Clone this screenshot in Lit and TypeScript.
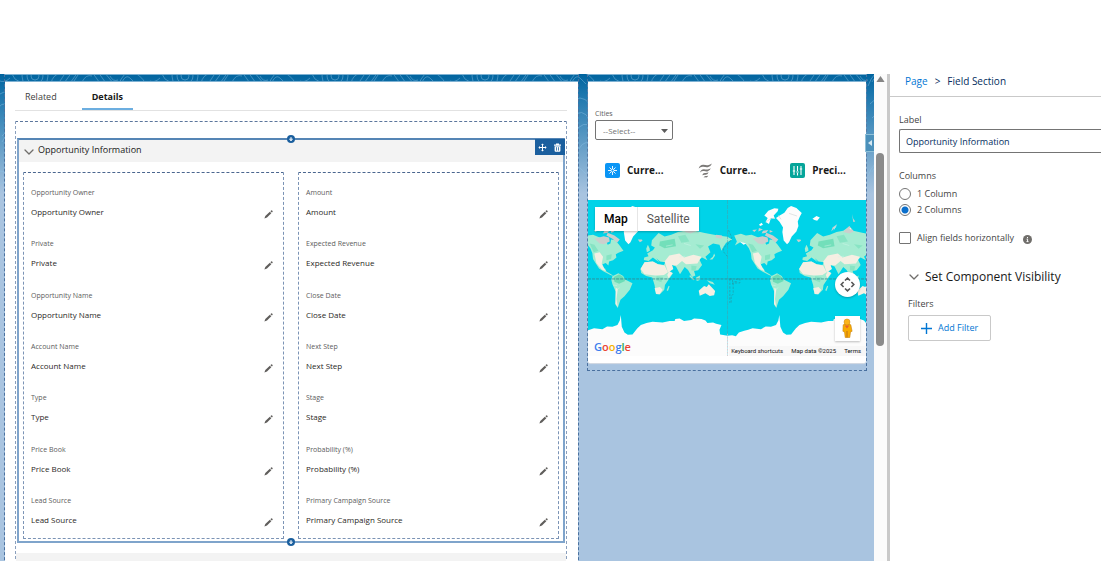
import { LitElement, html, css, svg } from "lit";
import { customElement, property, state } from "lit/decorators.js";

const FIELDS: string[][] = [
  ["Opportunity Owner", "Private", "Opportunity Name", "Account Name", "Type", "Price Book", "Lead Source"],
  ["Amount", "Expected Revenue", "Close Date", "Next Step", "Stage", "Probability (%)", "Primary Campaign Source"],
];

const chevron = html`<svg class="chevron" viewBox="0 0 10 6" aria-hidden="true">
  <path d="M1 1l4 4 4-4" fill="none" stroke="#706e6b" stroke-width="1.3" stroke-linecap="round" stroke-linejoin="round" />
</svg>`;

const base = css`
  * {
    box-sizing: border-box;
  }
  button,
  input,
  select {
    font: inherit;
    color: inherit;
    margin: 0;
    padding: 0;
  }
  button {
    border: 0;
    background: none;
    cursor: pointer;
  }
  svg {
    display: block;
  }
  .chevron {
    width: 10px;
    height: 6px;
    flex: none;
  }
`;

@customElement("field-section")
export class FieldSection extends LitElement {
  @property() heading = "";

  static styles = [
    base,
    css`
      :host {
        display: block;
        position: relative;
        border: 2px solid #7fa4cb;
        border-top-color: #5585b5;
      }
      .header {
        display: flex;
        align-items: center;
        height: 22px;
        padding: 0 0 2px 5px;
        gap: 4px;
        background: #f3f3f3;
        color: #181818;
      }
      .header h2 {
        margin: 0;
        font-size: 9px;
        line-height: 14px;
        font-weight: 400;
      }
      .toggle {
        display: flex;
        align-items: center;
        height: 20px;
        padding-top: 4px;
      }
      .tools {
        position: absolute;
        top: -1px;
        right: -2px;
        display: flex;
        gap: 4px;
        padding: 4px 2px 3px;
        background: #1b5f9e;
      }
      .tools svg {
        width: 11px;
        height: 9px;
      }
      .dot {
        position: absolute;
        left: 50%;
        width: 8px;
        height: 8px;
        margin-left: -4px;
        border-radius: 50%;
        background: #1b5f9e;
      }
      .dot svg {
        width: 8px;
        height: 8px;
      }
      .dot.top {
        top: -5px;
      }
      .dot.bottom {
        bottom: -5px;
      }
      .columns {
        display: grid;
        grid-template-columns: 1fr 1fr;
        gap: 14px;
        padding: 10px 4px 2px;
      }
      .column {
        display: grid;
        align-content: space-between;
        min-height: 367px;
        margin: 0;
        padding: 14px 10px 11px 7px;
        border: 1px dashed #7b93b5;
        border-top-color: #4a668f;
      }
      .field {
        display: grid;
        grid-template-columns: 1fr 9px;
        row-gap: 6px;
      }
      dt {
        grid-column: 1 / 3;
        font-size: 7px;
        line-height: 12px;
        color: #5c5c5c;
      }
      dd {
        margin: 0;
        font-size: 8px;
        line-height: 14px;
        color: #2b2826;
      }
      .edit {
        align-self: end;
      }
      .edit svg {
        width: 9px;
        height: 9px;
      }
    `,
  ];

  private dot(place: string) {
    return html`<button class="dot ${place}" aria-label="Add component">
      <svg viewBox="0 0 8 8">
        <path d="M4 2v3.6M2.4 4.1h3.2M2.8 4.4L4 5.9l1.2-1.5" fill="none" stroke="#fff" stroke-width="0.9" />
      </svg>
    </button>`;
  }

  render() {
    return html`
      <div class="header">
        <button class="toggle" aria-label="Collapse section">${chevron}</button>
        <h2>${this.heading}</h2>
      </div>
      <div class="tools">
        <button aria-label="Move">
          <svg viewBox="0 0 11 9" fill="none" stroke="#fff">
            <path d="M5.5 1v7M2 4.5h7" />
            <path d="M4.1 2l1.4-1.6L6.9 2zM4.1 7l1.4 1.6L6.9 7zM3 3.1L1.4 4.5 3 5.9zM8 3.1l1.6 1.4L8 5.9z" fill="#fff" stroke="none" />
          </svg>
        </button>
        <button aria-label="Delete">
          <svg viewBox="0 0 11 9">
            <path d="M2 1.6h2V.5h3v1.1h2v1.1H2z" fill="#fff" />
            <path d="M2.6 3.3h5.8v4.4q0 1-1 1H3.6q-1 0-1-1z" fill="#fff" />
            <path d="M4.5 4.2v3.4M6.5 4.2v3.4" stroke="#1b5f9e" stroke-width="0.8" />
          </svg>
        </button>
      </div>
      <div class="columns">
        ${FIELDS.map(
          (column) => html`<dl class="column">
            ${column.map(
              (name) => html`<div class="field">
                <dt>${name}</dt>
                <dd>${name}</dd>
                <button class="edit" aria-label="Edit ${name}">
                  <svg viewBox="0 0 9 9" fill="#5f5d5b">
                    <path d="M1.3 5.9L5.8 1.8l1.5 1.5L3 7.6.4 8.6z" />
                    <path d="M6.4 1.2L7.1.5q.5-.4 1 0l.4.4q.4.5 0 1l-.7.7z" />
                  </svg>
                </button>
              </div>`
            )}
          </dl>`
        )}
      </div>
      ${this.dot("top")}${this.dot("bottom")}
    `;
  }
}

const world = svg`
  <g id="world">
    <g fill="#a5ecd2">
      <path d="M20 106L40 101 55 106 72 104 92 112 110 122 116 134 124 130 126 118 138 120 150 134 163 152 148 158 140 162 142 172 132 180 120 184 118 196 110 188 100 192 98 206 108 205 112 214 126 222 134 228 124 224 104 214 90 205 80 189 72 176 70 159 64 144 54 131 38 126 22 136 28 124z" />
      <path d="M130 228L148 219 162 227 168 238 190 249 182 268 166 288 154 298 150 310 146 323 139 312 140 274 130 252 127 240z" />
      <path d="M214 206L226 186 251 184 266 192 286 194 296 214 311 219 298 238 287 254 285 268 272 282 260 281 256 254 249 232 231 227 216 218z" />
      <path d="M298 256l3 2-5 14-4-2z" />
      <path d="M224 179L225 172 238 168 234 160 251 150 257 142 246 136 248 120 268 99 286 109 306 104 326 96 346 92 364 79 376 92 406 99 446 106 474 110 488 118 470 128 462 140 456 152 450 134 431 130 416 139 423 156 408 170 414 180 398 172 390 178 398 194 386 210 374 212 378 226 368 230 356 209 346 200 332 222 320 199 308 194 311 206 296 217 284 194 288 186 272 184 261 174 270 186 251 172 238 182z" />
      <path d="M231 146l5-12 5 10 1 8-9 4zM420 178l10-8 4-10 3 6-8 12z" />
      <path d="M362 224l14 14-4 2-12-12zM380 232l12-6-2 14-8 2zM412 240l18 5 6 8-14-4z" />
    </g>
    <g fill="#66dcb4">
      <path d="M134 230l16-8 12 8 6 12-18 8-14-6z" opacity=".9" />
      <path d="M62 130l14 4 12 18-14 4z" opacity=".5" />
      <path d="M272 124l44-8 4 22-34 6-16-8z" opacity=".8" />
      <path d="M326 108l22-4 12 20-24 4zM378 132l26 4-12 10zM366 196l16 2-4 14-12-2zM262 228l20 2-6 16-16-6z" opacity=".45" />
      <path d="M112 166l16-4-2 14-14 4z" opacity=".5" />
    </g>
    <g fill="#f5efe3">
      <path d="M76 160L92 156 102 170 98 190 110 212 98 208 82 188z" />
      <path d="M214 206L226 186 251 184 266 192 286 196 296 216 284 224 258 226 226 222z" />
      <path d="M286 184L300 166 330 160 344 172 372 164 396 170 384 190 350 192 338 182 322 196 308 194 312 206 296 217z" />
      <path d="M388 271L404 257 412 260 418 252 428 262 437 272 434 285 421 287 408 279 391 286z" />
      <path d="M256 264l16-4 8 8-9 14-10-1zM140 262l6 4-4 30 4 24-7-10z" />
      <path d="M300 212l10 6-12 16-4-10z" />
    </g>
    <g fill="#cbcfcd">
      <path d="M76 116L104 108 120 112 122 124 104 132 92 130zM116 98L136 106 152 118 144 128 130 116 112 106z" />
      <path d="M94 84l12 4-14 6zM106 92l16-2-6 8-14 2zM74 90l14-2-8 8zM126 90l10 4-10 4z" />
      <path d="M346 96l18-18 14 16-14 6zM310 94l4-12 14-10-10 14zM372 42l4 14 6 8-6 2zM440 104l18 2-2 10-18-4z" />
      <path d="M206 118l12 0 2 4-8 4z" />
    </g>
    <g fill="#fcfcfc">
      <path d="M145 54L156 46 170 38 180 24 190 18 206 24 222 39 216 50 210 64 212 78 206 94 192 109 184 126 178 132 168 121 164 96 166 82 156 66z" />
      <path d="M110 46L122 32 140 25 152 26 150 34 138 46 142 56 130 54 124 72 114 66 120 54zM254 56l12-8 10 4-8 10-8-2zM318 90l-2 6 4-14 8-8zM364 86l4-2 2 4zM36 124l20 6-8 4zM94 74l8-6 4 6-8 4z" />
      <path d="M0 406L14 404 25 407 34 396 50 391 62 388 75 383 100 386 114 378 130 379 145 374 152 360 155 344 158 379 166 396 176 403 190 402 204 384 215 374 232 368 250 364 280 366 301 362 316 362 318 356 331 354 344 362 366 359 374 354 396 356 408 360 414 368 431 366 440 370 456 374 450 388 452 402 474 406V468H0z" />
    </g>
    <path d="M114 66l16-10 12-2M152 46l8 12M184 40l24 8" stroke="#d3d8d8" stroke-width="2" fill="none" />
    <path d="M142 268l10-6M330 170l18-2M344 130l20 6M290 138l20-4M132 254l12 2" stroke="#d5f8ec" stroke-width="2" opacity=".7" />
  </g>`;

@customElement("world-map")
export class WorldMap extends LitElement {
  static styles = [
    base,
    css`
      :host {
        display: block;
        position: relative;
        height: 156px;
        overflow: hidden;
        background: #00d3e8;
        font-family: Roboto, sans-serif;
      }
      .canvas {
        width: 100%;
        height: 100%;
      }
      .types {
        position: absolute;
        top: 7px;
        left: 7px;
        display: flex;
        background: #fff;
        box-shadow: 0 1px 2px rgba(0, 0, 0, 0.25);
      }
      .types button {
        height: 24px;
        padding: 0 9px;
        font-size: 12px;
        color: #565656;
      }
      .types .on {
        font-weight: 500;
        color: #000;
        border-right: 1px solid #e6e6e6;
      }
      .pan {
        position: absolute;
        right: 6px;
        top: 72px;
        width: 25px;
        height: 25px;
        border-radius: 50%;
        background: #fff;
        box-shadow: 0 1px 2px rgba(0, 0, 0, 0.25);
      }
      .pegman {
        position: absolute;
        right: 6px;
        bottom: 15px;
        width: 25px;
        height: 25px;
        background: #fff;
        box-shadow: 0 1px 2px rgba(0, 0, 0, 0.25);
      }
      .pan svg,
      .pegman svg {
        width: 25px;
        height: 25px;
      }
      .logo {
        position: absolute;
        left: 6px;
        bottom: 2px;
        font: 600 11px/14px "Open Sans", sans-serif;
      }
      .b {
        color: #3b7ded;
      }
      .r {
        color: #ea4335;
      }
      .y {
        color: #f5b400;
      }
      .g {
        color: #34a853;
      }
      .legal {
        position: absolute;
        right: 0;
        bottom: 0;
        display: flex;
        gap: 8px;
        padding: 0 5px 1px 2px;
        font-size: 6px;
        line-height: 9px;
        color: #111;
        background: rgba(245, 245, 245, 0.8);
      }
      .legal button,
      .legal a {
        font-size: 6px;
        color: inherit;
        text-decoration: none;
      }
    `,
  ];

  render() {
    return html`
      <svg class="canvas" viewBox="0 0 831 468" preserveAspectRatio="xMinYMin slice" role="img" aria-label="World map">
        <defs>${world}</defs>
        <use href="#world" x="-57" />
        <use href="#world" x="417" />
        <path d="M417 0V400" stroke="#4d9aa6" stroke-width="1.5" stroke-dasharray="12 3" />
        <path d="M417 400V468" stroke="#e6bcc0" stroke-width="2" stroke-dasharray="5 4" />
        <path d="M0 236H831" stroke="#35838c" stroke-width="2.4" stroke-dasharray="9 3" />
        <path
          d="M420 90l10 22-8 16-18 16 2 12 10 12M424 236v70l-6 6M424 236h8l0 8h12v-8h10v12h-22v8M434 248v34l-6 4v22"
          fill="none" stroke="#2f8b95" stroke-width="2" stroke-dasharray="7 4" opacity=".8"
        />
      </svg>
      <div class="types">
        <button class="on">Map</button>
        <button>Satellite</button>
      </div>
      <button class="pan" aria-label="Map camera controls">
        <svg viewBox="0 0 25 25" fill="none" stroke="#555" stroke-width="1.6">
          <path d="M10 8.5l2.5-2.4L15 8.5M10 16.5l2.5 2.4 2.5-2.4M8.6 10l-2.4 2.5L8.6 15M16.4 10l2.4 2.5-2.4 2.5" />
        </svg>
      </button>
      <button class="pegman" aria-label="Street View">
        <svg viewBox="0 0 25 25">
          <path d="M8.2 8.8q4-2.6 7.6 0l1.3 6.5-1.6.6-.7 5.6h-4.6l-.7-5.6-1.6-.6z" fill="#f9ab00" stroke="#c88516" stroke-width=".6" />
          <circle cx="12" cy="6" r="3" fill="#fbb41a" stroke="#c88516" stroke-width=".5" />
          <path d="M9.6 9.4L12 12.4l2.4-3z" fill="#e9622b" />
          <path d="M12 15v6.4" stroke="#b3651a" stroke-width=".8" />
        </svg>
      </button>
      <div class="logo" aria-label="Google"><span class="b">G</span><span class="r">o</span><span class="y">o</span><span class="b">g</span><span class="g">l</span><span class="r">e</span></div>
      <div class="legal">
        <button>Keyboard shortcuts</button>
        <span>Map data ©2025</span>
        <a href="#terms">Terms</a>
      </div>
    `;
  }
}

const sunIcon = html`<svg viewBox="0 0 15 15">
  <rect width="15" height="15" rx="2" fill="#0a95f5" />
  <path d="M7.5 3v9M3 7.5h9M4.5 4.5l6 6M10.5 4.5l-6 6" stroke="#fff" stroke-width=".9" />
  <circle cx="7.5" cy="7.5" r="1.5" fill="#0a95f5" stroke="#fff" stroke-width=".8" />
</svg>`;

const windIcon = html`<svg viewBox="0 0 15 15" fill="#7b7977">
  <path d="M.6 5.4Q2 1.6 5.4 1.8q2.6.6 4.6.4Q12.200 1.800 14 .6 12.800 3.800 9.800 4.200 7.600 4.400 5.400 3.800 2.800 3.400.600 5.400z" />
  <path d="M2 9.400Q3.200 6 6 6.200q2 .4 3.600.2Q11.400 6.200 12.800 5.200 11.800 8 9.400 8.400 7.600 8.600 6 8 4 7.600 2 9.400z" />
  <path d="M4.200 12.200Q5 9.800 7 9.900q1.800.3 3.600-.7-.7 2.400-2.700 2.600-1.900-.3-3.700.4z" />
  <path d="M5.600 14.600Q6.200 13 7.600 13q1.400.1 2.600-.5-.6 1.900-2 2-1.400-.3-2.600.1z" />
</svg>`;

const rainIcon = html`<svg viewBox="0 0 15 15">
  <rect width="15" height="15" rx="2" fill="#06a59a" />
  <path d="M4 3v9M7.500 3v5M7.500 10v2.400M11 3v9" stroke="#fff" stroke-width="1.100" />
  <path d="M2.800 8h2.400M6.300 9h2.400M9.800 6h2.400" stroke="#fff" stroke-width="1.100" />
</svg>`;

@customElement("weather-card")
export class WeatherCard extends LitElement {
  static styles = [
    base,
    css`
      :host {
        display: block;
        padding: 26px 0 7px;
        background: #fff;
        border-radius: 0 0 2px 2px;
        box-shadow: 0 1px 1px #d5dbe3;
      }
      .city {
        width: 78px;
        margin-left: 7px;
      }
      label {
        display: block;
        font-size: 7px;
        line-height: 12px;
        color: #5c5c5c;
      }
      .picker {
        display: grid;
        align-items: center;
      }
      .picker > * {
        grid-area: 1 / 1;
      }
      select {
        appearance: none;
        width: 100%;
        height: 20px;
        padding-left: 7px;
        border: 1px solid #747474;
        border-radius: 2px;
        background: #fff;
        font-size: 8px;
        color: #747474;
      }
      .arrow {
        width: 7px;
        height: 4px;
        justify-self: end;
        margin: 2px 5px 0 0;
        pointer-events: none;
      }
      .tabs {
        display: grid;
        grid-template-columns: repeat(3, 1fr);
        padding: 22px 0;
      }
      .tabs button {
        display: flex;
        align-items: center;
        gap: 7px;
        height: 16px;
        padding-left: 17px;
        font-size: 10px;
        line-height: 14px;
        font-weight: 700;
        color: #181818;
      }
      .tabs svg {
        width: 15px;
        height: 15px;
        flex: none;
      }
    `,
  ];

  render() {
    return html`
      <div class="city">
        <label for="city">Cities</label>
        <div class="picker">
          <select id="city"><option>--Select--</option></select>
          <svg class="arrow" viewBox="0 0 7 4"><path d="M0 0h7L3.500 4z" fill="#5c5c5c" /></svg>
        </div>
      </div>
      <div class="tabs">
        <button>${sunIcon}<span>Curre...</span></button>
        <button>${windIcon}<span>Curre...</span></button>
        <button>${rainIcon}<span>Preci...</span></button>
      </div>
      <world-map></world-map>
    `;
  }
}

@customElement("property-panel")
export class PropertyPanel extends LitElement {
  @property() label = "";
  @state() private columns = 2;

  static styles = [
    base,
    css`
      :host {
        display: block;
        background: #fff;
        color: #444;
        font-size: 9px;
        line-height: 16px;
      }
      .crumbs {
        display: flex;
        gap: 7px;
        height: 23px;
        padding-left: 15px;
        border-bottom: 1px solid #c9c9c9;
        font-size: 10px;
        line-height: 14px;
        color: #032d60;
      }
      a {
        color: #0176d3;
        text-decoration: none;
      }
      .form {
        padding: 15px 0 0 9px;
      }
      .caption {
        display: block;
        height: 17px;
      }
      .text {
        display: block;
        width: 100%;
        height: 24px;
        padding-left: 6px;
        border: 1px solid #747474;
        border-right: 0;
        border-radius: 2px 0 0 2px;
        color: #032d60;
      }
      fieldset {
        margin: 15px 0 0;
        padding: 0;
        border: 0;
      }
      legend {
        height: 18px;
        padding: 0;
      }
      .option {
        display: flex;
        align-items: center;
        gap: 6px;
        height: 16px;
      }
      .option input {
        appearance: none;
        width: 12px;
        height: 12px;
        border: 1px solid #747474;
        background: #fff;
        flex: none;
      }
      .option input[type="radio"] {
        border-radius: 50%;
      }
      .option input[type="checkbox"] {
        border-radius: 1px;
      }
      .option input:checked {
        background: radial-gradient(#0b6fcc 3px, #fff 4px);
      }
      .align {
        margin-top: 12px;
      }
      .info {
        width: 9px;
        height: 9px;
        margin: 3px 0 0 3px;
      }
      .visibility {
        padding-left: 9px;
      }
      h3 {
        display: flex;
        align-items: center;
        gap: 6px;
        margin: 22px 0 10px;
        padding-left: 1px;
        font-size: 12px;
        line-height: 18px;
        font-weight: 400;
        color: #181818;
      }
      .filters {
        height: 19px;
      }
      .add {
        display: flex;
        align-items: center;
        gap: 6px;
        height: 26px;
        padding: 0 12px;
        border: 1px solid #c9c9c9;
        border-radius: 2px;
        background: #fff;
        color: #0176d3;
      }
      .add svg {
        width: 11px;
        height: 11px;
      }
    `,
  ];

  render() {
    return html`
      <nav class="crumbs">
        <a href="#page">Page</a><span>&gt;</span><span>Field Section</span>
      </nav>
      <div class="form">
        <label class="caption" for="label">Label</label>
        <input class="text" id="label" .value=${this.label} />
        <fieldset>
          <legend>Columns</legend>
          ${[1, 2].map(
            (n) => html`<label class="option">
              <input type="radio" name="columns" .checked=${this.columns === n} @change=${() => (this.columns = n)} />
              <span>${n} ${n === 1 ? "Column" : "Columns"}</span>
            </label>`
          )}
        </fieldset>
        <label class="option align">
          <input type="checkbox" />
          <span>Align fields horizontally</span>
          <svg class="info" viewBox="0 0 9 9">
            <circle cx="4.500" cy="4.500" r="4.500" fill="#706e6b" />
            <path d="M4.500 2v1.200M3.600 4.200h1v2.200M3.500 6.600h2" stroke="#fff" fill="none" />
          </svg>
        </label>
        <section class="visibility">
          <h3>${chevron}Set Component Visibility</h3>
          <div class="filters">Filters</div>
          <button class="add">
            <svg viewBox="0 0 11 11"><path d="M5.500 0v11M0 5.500h11" stroke="#0176d3" stroke-width="1.400" /></svg>
            <span>Add Filter</span>
          </button>
        </section>
      </div>
    `;
  }
}

const contours = html`<svg class="contours" aria-hidden="true">
  <defs>
    <pattern id="topo" width="150" height="90" patternUnits="userSpaceOnUse">
      <g fill="none" stroke="#8ec3e6" stroke-width=".7" opacity=".6">
        <circle cx="35" cy="2" r="4" /><circle cx="35" cy="2" r="8" /><circle cx="35" cy="2" r="13" />
        <path d="M58 10L66-2M62 12L72-2M68 12L78-2M92-2l10 14M98-2l10 14M104-2l10 12M118 12q6-16 14-14t14 12" />
        <path d="M-2 6q6 4 12-2M12 0q2 6 8 8M82 8q4-8 10-6M110 2q3 6 8 4M122 8q4-8 8-4t6 6M51 9q2-8 8-9M72 10l8-12" />
        <path d="M0 20q14-8 10 10t8 24M-2 34q8-10 12 4t-8 30M2 62q10-12 14 2t-10 22" />
        <path d="M120 30q10-12 20 0t12 0M122 44q10-12 18 2t12 0M124 60q8-16 22-6M128 76q8-14 20-4" />
      </g>
    </pattern>
  </defs>
  <rect width="100%" height="100%" fill="url(#topo)" />
</svg>`;

@customElement("app-root")
export class AppRoot extends LitElement {
  static styles = [
    base,
    css`
      :host {
        display: flex;
        box-sizing: border-box;
        height: 100vh;
        padding-top: 74px;
        overflow: hidden;
        background: #fff;
        font-family: "Open Sans", "Noto Sans", sans-serif;
      }
      .canvas {
        position: relative;
        flex: 1;
        min-width: 0;
        display: grid;
        grid-template-columns: 115fr 56fr;
        grid-template-rows: 100%;
        align-items: start;
        gap: 8px;
        padding: 0 7px 0 4px;
        background: linear-gradient(#00649f 0, #1b76ad 20px, #a9c4e0 120px);
        overflow: hidden;
      }
      .contours {
        position: absolute;
        inset: 0;
        width: 100%;
        height: 110px;
      }
      .region {
        position: relative;
        padding-top: 8px;
        border: 1px dashed #49709f;
        border-top: 1px solid #7fb2d3;
      }
      .side {
        padding-bottom: 7px;
      }
      .bar {
        height: 7px;
        margin-top: -8px;
        border-bottom: 1px solid #7fb2d3;
      }
      .card {
        padding: 0 11px 0 10px;
        background: #fff;
      }
      .tabs {
        display: flex;
        gap: 15px;
        height: 29px;
        border-bottom: 1px solid #e2e2e2;
        font-size: 9px;
        color: #3e3e3c;
      }
      .tabs button {
        padding: 3px 10px 0;
        border-bottom: 2px solid transparent;
      }
      .tabs .active {
        font-weight: 700;
        color: #181818;
        border-bottom-color: #6caee0;
      }
      .drop {
        margin-top: 10px;
        padding: 16px 1px 0;
        border: 1px dashed #8a9fbd;
        border-top-color: #5c769c;
      }
      .next {
        height: 40px;
        margin: 10px -1px 0;
        background: #f3f3f3;
      }
      .handle {
        position: absolute;
        top: 60px;
        right: 0;
        width: 9px;
        height: 18px;
        border: 1px solid #8fc0d8;
        border-right: 0;
        background: #4b90ba;
      }
      .handle svg {
        width: 7px;
        height: 8px;
      }
      .scroll {
        flex: none;
        width: 13px;
        padding: 2px 2px 0;
        background: #fbfbfb;
      }
      .scroll svg {
        width: 9px;
        height: 6px;
      }
      .thumb {
        width: 8px;
        height: 193px;
        margin-top: 71px;
        border-radius: 4px;
        background: #8b8b8b;
      }
      property-panel {
        flex: 0 0 214px;
        border-left: 3px solid #c9c9c9;
      }
    `,
  ];

  render() {
    return html`
      <main class="canvas">
        ${contours}
        <div class="region main">
          <div class="bar"></div>
          <div class="card">
            <div class="tabs">
              <button>Related</button>
              <button class="active">Details</button>
            </div>
            <div class="drop">
              <field-section heading="Opportunity Information"></field-section>
              <div class="next"></div>
            </div>
          </div>
        </div>
        <div class="region side">
          <div class="bar"></div>
          <weather-card></weather-card>
        </div>
        <button class="handle" aria-label="Show panel">
          <svg viewBox="0 0 7 8"><path d="M6 1v6L2 4z" fill="#d5e8f2" /></svg>
        </button>
      </main>
      <div class="scroll" aria-hidden="true">
        <svg viewBox="0 0 9 6"><path d="M4.500 0L8.600 6H.400z" fill="#858585" /></svg>
        <div class="thumb"></div>
      </div>
      <property-panel label="Opportunity Information"></property-panel>
    `;
  }
}
